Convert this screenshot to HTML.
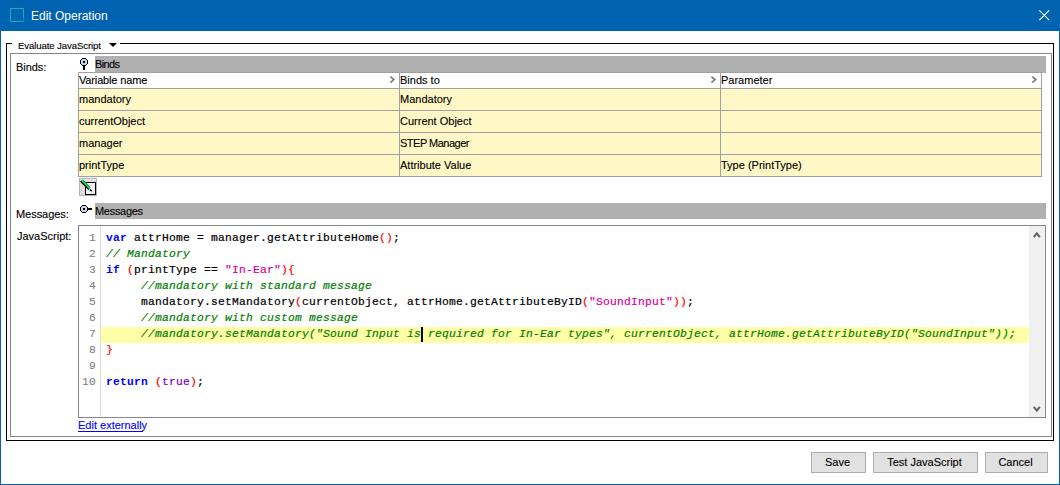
<!DOCTYPE html>
<html><head><meta charset="utf-8">
<style>
html,body{margin:0;padding:0;}
body{width:1060px;height:485px;overflow:hidden;background:#fff;position:relative;font-family:"Liberation Sans",sans-serif;font-size:11px;color:#000;-webkit-text-stroke:0.12px currentColor;}
.a{position:absolute;}
.t{position:absolute;white-space:pre;line-height:13px;height:13px;}
.code{position:absolute;white-space:pre;font-family:"Liberation Mono",monospace;font-size:11.3px;letter-spacing:0.22px;line-height:16px;height:16px;left:106px;-webkit-text-stroke:0.2px currentColor;}
.ln{position:absolute;font-family:"Liberation Mono",monospace;font-size:11.3px;letter-spacing:0.22px;line-height:16px;height:16px;left:78px;width:18px;text-align:right;color:#808080;-webkit-text-stroke:0.1px #808080;}
.kw{color:#0000ff;font-weight:bold;-webkit-text-stroke:0;}
.cm{color:#008000;font-style:italic;}
.st{color:#d4009a;}
.br{color:#ff0000;}
.tr{color:#8000c0;}
.btn{position:absolute;top:452px;height:21px;box-sizing:border-box;border:1px solid #adadad;background:#e1e1e1;text-align:center;line-height:18px;padding-right:2px;}
</style></head><body>
<!-- window frame -->
<div class="a" style="left:0;top:0;width:1060px;height:31px;background:#0063b1;"></div>
<div class="a" style="left:0;top:0;width:1px;height:485px;background:#0063b1;"></div>
<div class="a" style="left:1059px;top:0;width:1px;height:485px;background:#0063b1;"></div>
<div class="a" style="left:0;top:484px;width:1060px;height:1px;background:#0063b1;"></div>
<svg class="a" style="left:10px;top:8px;" width="14" height="14" viewBox="0 0 14 14" shape-rendering="crispEdges" fill="#14aec4"><rect x="0" y="0" width="14" height="1"/><rect x="0" y="0" width="1" height="14"/><rect x="0" y="13" width="14" height="1"/><rect x="13" y="0" width="1" height="10"/><rect x="13" y="11" width="1" height="1"/></svg>
<div class="t" style="left:31px;top:8px;font-size:12px;line-height:16px;height:16px;color:#fff;-webkit-text-stroke:0;">Edit Operation</div>
<svg class="a" style="left:1038px;top:9px;" width="13" height="13" viewBox="0 0 13 13"><path d="M1.3 1.3L11.2 11.2M11.2 1.3L1.3 11.2" stroke="#fff" stroke-width="1.05" fill="none"/></svg>

<!-- group box -->
<div class="a" style="left:6px;top:43px;width:1048px;height:398px;box-sizing:border-box;border:1px solid #000;"></div>
<div class="a" style="left:12px;top:42px;width:108px;height:3px;background:#fff;"></div>
<div class="t" style="left:18px;top:39px;font-size:9.6px;letter-spacing:-0.1px;">Evaluate JavaScript</div>
<svg class="a" style="left:109px;top:43px;" width="8" height="4" viewBox="0 0 8 4"><path d="M0 0H8L4 4Z" fill="#000"/></svg>
<div class="a" style="left:10px;top:53px;width:1042px;height:384px;box-sizing:border-box;border:1px solid #828790;"></div>

<!-- Binds -->
<div class="t" style="left:16px;top:61px;letter-spacing:-0.05px;">Binds:</div>
<svg class="a" style="left:80px;top:58px;" width="8" height="12" viewBox="0 0 8 12" shape-rendering="crispEdges"><rect x="1" y="1" width="6" height="6" fill="#c4d6ea"/><rect x="0" y="2" width="1" height="4" fill="#000"/><rect x="7" y="2" width="1" height="4" fill="#000"/><rect x="2" y="0" width="4" height="1" fill="#000"/><rect x="2" y="7" width="4" height="1" fill="#000"/><rect x="1" y="1" width="1" height="1" fill="#000"/><rect x="6" y="1" width="1" height="1" fill="#000"/><rect x="1" y="6" width="1" height="1" fill="#000"/><rect x="6" y="6" width="1" height="1" fill="#000"/><rect x="3" y="3" width="2" height="2" fill="#000"/><rect x="3" y="8" width="2" height="4" fill="#000"/></svg>
<div class="a" style="left:95px;top:56px;width:951px;height:17px;background:#b0b0b0;"></div>
<div class="t" style="left:95px;top:58px;letter-spacing:-0.6px;">Binds</div>

<!-- table -->
<div class="a" style="left:78px;top:72px;width:964px;height:105px;box-sizing:border-box;border:1px solid #a0a0a0;background:#fff8c6;"></div>
<div class="a" style="left:79px;top:73px;width:962px;height:15px;background:#fff;"></div>
<div class="a" style="left:79px;top:88px;width:962px;height:1px;background:#a0a0a0;"></div>
<div class="a" style="left:79px;top:110px;width:962px;height:1px;background:#a0a0a0;"></div>
<div class="a" style="left:79px;top:132px;width:962px;height:1px;background:#a0a0a0;"></div>
<div class="a" style="left:79px;top:154px;width:962px;height:1px;background:#a0a0a0;"></div>
<div class="a" style="left:399px;top:73px;width:1px;height:103px;background:#a0a0a0;"></div>
<div class="a" style="left:720px;top:73px;width:1px;height:103px;background:#a0a0a0;"></div>
<svg class="a" style="left:389px;top:75px;" width="8" height="10" viewBox="0 0 8 10"><path d="M1.4 1.6L4.8 4.6L1.4 7.6" stroke="#808080" stroke-width="1.8" fill="none"/></svg>
<svg class="a" style="left:710px;top:75px;" width="8" height="10" viewBox="0 0 8 10"><path d="M1.4 1.6L4.8 4.6L1.4 7.6" stroke="#808080" stroke-width="1.8" fill="none"/></svg>
<svg class="a" style="left:1031px;top:75px;" width="8" height="10" viewBox="0 0 8 10"><path d="M1.4 1.6L4.8 4.6L1.4 7.6" stroke="#808080" stroke-width="1.8" fill="none"/></svg>
<div class="t" style="left:79px;top:74px;letter-spacing:-0.15px;">Variable name</div>
<div class="t" style="left:400px;top:74px;">Binds to</div>
<div class="t" style="left:721px;top:74px;">Parameter</div>
<div class="t" style="left:79px;top:93px;">mandatory</div>
<div class="t" style="left:400px;top:93px;">Mandatory</div>
<div class="t" style="left:79px;top:115px;">currentObject</div>
<div class="t" style="left:400px;top:115px;">Current Object</div>
<div class="t" style="left:79px;top:137px;">manager</div>
<div class="t" style="left:400px;top:137px;letter-spacing:-0.5px;">STEP Manager</div>
<div class="t" style="left:79px;top:159px;">printType</div>
<div class="t" style="left:400px;top:159px;">Attribute Value</div>
<div class="t" style="left:721px;top:159px;">Type (PrintType)</div>

<!-- pencil button -->
<div class="a" style="left:79px;top:178px;width:18px;height:18px;box-sizing:border-box;border:1px solid #b4b4b4;background:#dcdcdc;"></div>
<div class="a" style="left:80px;top:179px;width:16px;height:1px;background:#e8e8e8;"></div>
<div class="a" style="left:85px;top:182px;width:11px;height:13px;box-sizing:border-box;border:1px solid #000;background:#f0f0f0;"></div>
<svg class="a" style="left:79px;top:178px;" width="18" height="18" viewBox="0 0 18 18"><path d="M2.0 3.6L9.4 11.0" stroke="#000" stroke-width="1.5" stroke-linecap="round"/><path d="M3.2 2.7L10.4 9.9" stroke="#18d048" stroke-width="1.9" stroke-linecap="round"/><path d="M4.0 2.0L11.0 9.0" stroke="#008a20" stroke-width="0.8"/><path d="M10.9 11.5L12.7 13.3" stroke="#000" stroke-width="1.4"/></svg>

<!-- Messages -->
<div class="t" style="left:16px;top:208px;letter-spacing:-0.05px;">Messages:</div>
<svg class="a" style="left:80px;top:205px;" width="12" height="8" viewBox="0 0 12 8" shape-rendering="crispEdges"><rect x="1" y="1" width="6" height="6" fill="#c4d6ea"/><rect x="0" y="2" width="1" height="4" fill="#000"/><rect x="7" y="2" width="1" height="4" fill="#000"/><rect x="2" y="0" width="4" height="1" fill="#000"/><rect x="2" y="7" width="4" height="1" fill="#000"/><rect x="1" y="1" width="1" height="1" fill="#000"/><rect x="6" y="1" width="1" height="1" fill="#000"/><rect x="1" y="6" width="1" height="1" fill="#000"/><rect x="6" y="6" width="1" height="1" fill="#000"/><rect x="3" y="3" width="2" height="2" fill="#000"/><rect x="8" y="3" width="4" height="2" fill="#000"/></svg>
<div class="a" style="left:95px;top:203px;width:951px;height:16px;background:#b0b0b0;"></div>
<div class="t" style="left:95px;top:205px;letter-spacing:-0.3px;">Messages</div>

<!-- JavaScript -->
<div class="t" style="left:17px;top:230px;">JavaScript:</div>
<div class="a" style="left:78px;top:225px;width:968px;height:193px;box-sizing:border-box;border:1px solid #828790;background:#fff;"></div>
<div class="a" style="left:100px;top:226px;width:1px;height:191px;background:#dcdcdc;"></div>
<div class="a" style="left:101px;top:327px;width:928px;height:16px;background:#ffffa8;"></div>
<div class="a" style="left:1029px;top:226px;width:16px;height:191px;background:#f0f0f0;"></div>
<svg class="a" style="left:1032px;top:231px;" width="10" height="8" viewBox="0 0 10 8"><path d="M1.8 6.2L4.8 2.4L7.8 6.2" stroke="#606060" stroke-width="2" fill="none"/></svg>
<svg class="a" style="left:1032px;top:405px;" width="10" height="8" viewBox="0 0 10 8"><path d="M1.8 1.8L4.8 5.6L7.8 1.8" stroke="#606060" stroke-width="2" fill="none"/></svg>

<div class="ln" style="top:230px;">1</div>
<div class="ln" style="top:246px;">2</div>
<div class="ln" style="top:262px;">3</div>
<div class="ln" style="top:278px;">4</div>
<div class="ln" style="top:294px;">5</div>
<div class="ln" style="top:310px;">6</div>
<div class="ln" style="top:326px;">7</div>
<div class="ln" style="top:342px;">8</div>
<div class="ln" style="top:358px;">9</div>
<div class="ln" style="top:374px;">10</div>

<div class="code" style="top:230px;"><span class="kw">var</span> attrHome = manager.getAttributeHome<span class="br">()</span>;</div>
<div class="code" style="top:246px;"><span class="cm">// Mandatory</span></div>
<div class="code" style="top:262px;"><span class="kw">if</span> <span class="br">(</span>printType == <span class="st">"In-Ear"</span><span class="br">){</span></div>
<div class="code" style="top:278px;">     <span class="cm">//mandatory with standard message</span></div>
<div class="code" style="top:294px;">     mandatory.setMandatory<span class="br">(</span>currentObject, attrHome.getAttributeByID<span class="br">(</span><span class="st">"SoundInput"</span><span class="br">))</span>;</div>
<div class="code" style="top:310px;">     <span class="cm">//mandatory with custom message</span></div>
<div class="code" style="top:326px;">     <span class="cm">//mandatory.setMandatory("Sound Input is required for In-Ear types", currentObject, attrHome.getAttributeByID("SoundInput"));</span></div>
<div class="code" style="top:342px;"><span class="br">}</span></div>
<div class="code" style="top:374px;"><span class="kw">return</span> <span class="br">(</span><span class="tr">true</span><span class="br">)</span>;</div>
<div class="a" style="left:421px;top:327px;width:2px;height:15px;background:#000;"></div>

<!-- link -->
<div class="t" style="left:78px;top:419px;color:#0000ff;">Edit externally</div>
<div class="a" style="left:78px;top:431px;width:65px;height:1px;background:#0000ff;"></div>

<!-- buttons -->
<div class="btn" style="left:811px;width:55px;">Save</div>
<div class="btn" style="left:873px;width:105px;">Test JavaScript</div>
<div class="btn" style="left:985px;width:63px;">Cancel</div>
</body></html>
